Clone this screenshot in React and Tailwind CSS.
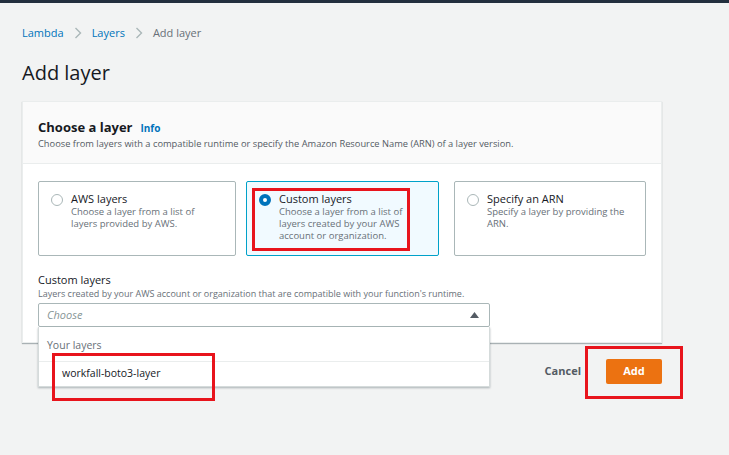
import React from 'react';

const font = "font-['Open_Sans','Noto_Sans',sans-serif]";

function Radio({ checked }) {
  if (checked) {
    return (
      <span className="mt-[2px] w-[12px] h-[12px] rounded-full border-[4px] border-[#0073bb] bg-white shrink-0" />
    );
  }
  return <span className="mt-[2px] w-[12px] h-[12px] rounded-full border border-[#aab7b8] bg-white shrink-0" />;
}

function Tile({ title, desc, checked, className = '' }) {
  return (
    <div
      className={`h-[75px] border rounded-[2px] px-[12px] pt-[10px] flex gap-[8px] ${
        checked ? 'bg-[#f1faff] border-[#00a1c9]' : 'bg-white border-[#aab7b8]'
      } ${className}`}
    >
      <Radio checked={checked} />
      <div className="flex flex-col">
        <span className="text-[11px] leading-[14px] text-[#16191f]">{title}</span>
        <span className="text-[9.5px] leading-[12px] text-[#687078] w-[140px]">{desc}</span>
      </div>
    </div>
  );
}

export default function App() {
  return (
    <div className={`relative w-full h-[455px] bg-[#f2f3f3] overflow-hidden ${font}`}>
      <div className="h-[3px] bg-[#232f3e]" />

      <div className="px-[22px]">
        {/* Breadcrumb */}
        <div className="flex items-center gap-[10px] mt-[23px] text-[11px] leading-[14px]">
          <span className="text-[#0073bb]">Lambda</span>
          <svg width="8" height="12" viewBox="0 0 8 12" fill="none" stroke="#aab7b8" strokeWidth="1.4">
            <path d="M1.5 1 L6.5 6 L1.5 11" />
          </svg>
          <span className="text-[#0073bb]">Layers</span>
          <svg width="8" height="12" viewBox="0 0 8 12" fill="none" stroke="#aab7b8" strokeWidth="1.4">
            <path d="M1.5 1 L6.5 6 L1.5 11" />
          </svg>
          <span className="text-[#687078]">Add layer</span>
        </div>

        <h1 className="mt-[20px] text-[20px] leading-[26px] text-[#16191f]">Add layer</h1>

        {/* Panel */}
        <div className="relative mt-[15px] w-[640px] bg-white border border-[#eaeded] shadow-[0_1px_1px_0_rgba(0,28,36,0.3)]">
          <div className="h-[62px] bg-[#fafafa] border-b border-[#eaeded] px-[15px] pt-[16px]">
            <div className="flex items-baseline gap-[8px]">
              <span className="text-[13px] leading-[18px] font-bold text-[#16191f]">Choose a layer</span>
              <span className="text-[10px] font-bold text-[#0073bb]">Info</span>
            </div>
            <div className="mt-[1px] text-[9.3px] leading-[13px] text-[#545b64]">
              Choose from layers with a compatible runtime or specify the Amazon Resource Name (ARN) of a layer version.
            </div>
          </div>

          <div className="px-[15px] pt-[17px] pb-[15px]">
            <div className="flex">
              <Tile className="w-[198px]" title="AWS layers" desc="Choose a layer from a list of layers provided by AWS." />
              <Tile
                checked
                className="w-[193px] ml-[10px]"
                title="Custom layers"
                desc="Choose a layer from a list of layers created by your AWS account or organization."
              />
              <Tile className="w-[192px] ml-[15px]" title="Specify an ARN" desc="Specify a layer by providing the ARN." />
            </div>

            <div className="mt-[17px] text-[11px] leading-[14px] text-[#16191f]">Custom layers</div>
            <div className="mt-[1px] text-[9px] leading-[12px] text-[#687078]">
              Layers created by your AWS account or organization that are compatible with your function's runtime.
            </div>

            <div className="relative mt-[3px] w-[452px]">
              <div className="h-[24px] border border-[#aab7b8] rounded-[2px] bg-white flex items-center justify-between pl-[8px] pr-[10px]">
                <span className="text-[11px] italic text-[#879596]">Choose</span>
                <svg width="9" height="6" viewBox="0 0 9 6">
                  <path d="M0 6 L4.5 0 L9 6 Z" fill="#545b64" />
                </svg>
              </div>
              {/* Dropdown */}
              <div className="absolute left-0 top-[24px] z-10 w-[452px] bg-white border border-t-0 border-[#d5dbdb] shadow-[0_1px_2px_rgba(0,28,36,0.3)]">
                <div className="h-[35px] border-b border-[#eaeded] pl-[8px] pt-[11px] text-[10.5px] text-[#687078]">
                  Your layers
                </div>
                <div className="h-[24px] pl-[23px] pt-[4px] text-[10.5px] text-[#16191f]">workfall-boto3-layer</div>
              </div>
            </div>
          </div>
        </div>

        {/* Footer */}
        <div className="w-[640px] flex justify-end items-center gap-[25px] mt-[16px]">
          <span className="text-[11px] font-bold text-[#545b64]">Cancel</span>
          <div className="w-[56px] h-[25px] bg-[#ec7211] rounded-[2px] flex items-center justify-center text-[11px] font-bold text-white">
            Add
          </div>
        </div>
      </div>

      {/* Annotations */}
      <div className="absolute left-[252px] top-[188px] w-[158px] h-[63px] border-[3px] border-[#e8141c] pointer-events-none z-20" />
      <div className="absolute left-[52px] top-[353px] w-[163px] h-[48px] border-[3px] border-[#e8141c] pointer-events-none z-20" />
      <div className="absolute left-[585px] top-[346px] w-[98px] h-[53px] border-[3px] border-[#e8141c] pointer-events-none z-20" />
    </div>
  );
}
